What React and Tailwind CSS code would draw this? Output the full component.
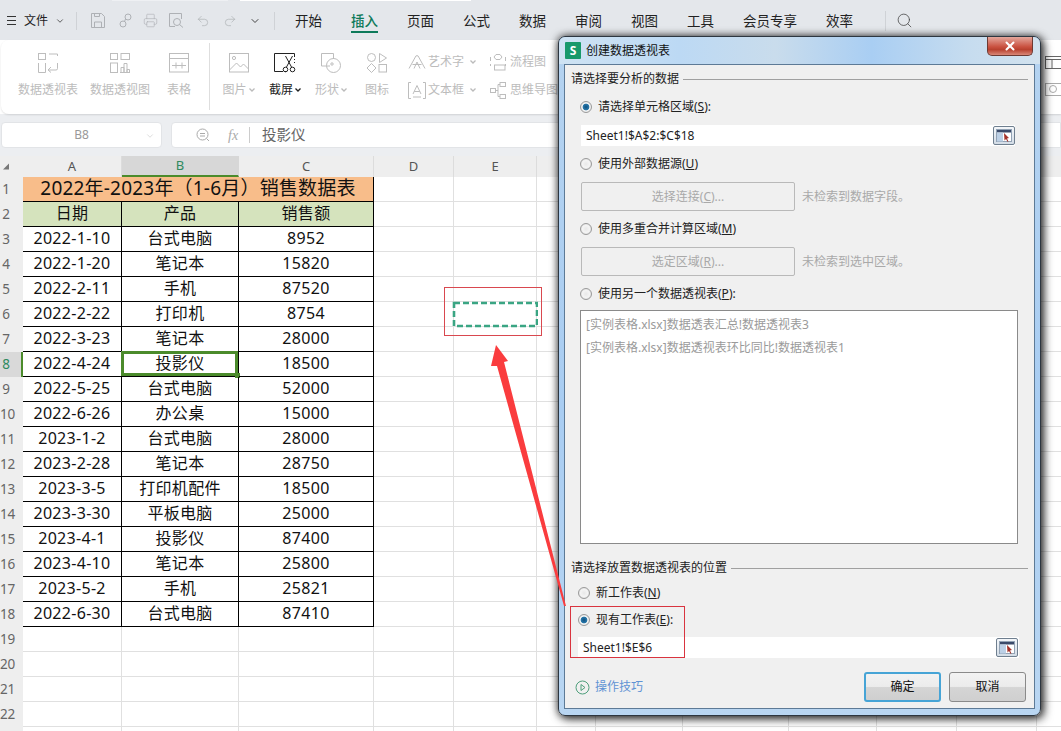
import React from "react";
import { ChevronDown, Printer, Undo2, Redo2, Search, X } from "lucide-react";

const Ic = ({ w = 20, h = 20, c = "#bdbdbd", children, className = "" }) => (
  <svg width={w} height={h} viewBox={`0 0 ${w} ${h}`} fill="none" stroke={c} strokeWidth="1" className={className}>
    {children}
  </svg>
);

const Pivot = () => (
  <Ic>
    <rect x="0.5" y="0.5" width="7" height="6" />
    <path d="M11 1h8.5v2M0.5 10v9.5h7V10M19.5 10v5.5a1.5 1.5 0 0 1-1.5 1.5h-7M13 14l-3 3 3 2.5" />
  </Ic>
);
const PivotChart = () => (
  <Ic>
    <rect x="0.5" y="0.5" width="7" height="6" />
    <rect x="11" y="0.5" width="8.5" height="6" />
    <rect x="0.5" y="10" width="7" height="9.5" />
    <path d="M11 19.5v-5h3v5M14 19.5v-9h3v9M17 19.5v-3h2.5v3M10 19.5h10" />
  </Ic>
);
const TableI = () => (
  <Ic>
    <rect x="0.5" y="0.5" width="19" height="18.5" />
    <path d="M0.5 5.5h19M3 12.5h14M7 9.5v6M13 9.5v6" />
  </Ic>
);
const Pic = () => (
  <Ic>
    <rect x="0.5" y="0.5" width="19" height="18.5" />
    <circle cx="5" cy="5" r="1.6" />
    <path d="M0.5 17l7-7 4 4 3-3 5 5" />
  </Ic>
);
const Shot = () => (
  <Ic w={22} h={20} c="#222">
    <path d="M9 18.5H0.5V0.5h20V4" />
    <path d="M11 18.5h1" strokeDasharray="1 1" />
    <path d="M20.5 6v1M20.5 9v1" />
    <path d="M11.5 3l6 11M18.5 3l-6 11" />
    <circle cx="11.5" cy="16.5" r="2.3" />
    <circle cx="18.5" cy="16.5" r="2.3" />
  </Ic>
);
const Shape = () => (
  <Ic>
    <path d="M9 13H0.5V0.5h12V6" />
    <circle cx="12.5" cy="12.5" r="7" />
    <circle cx="11" cy="11" r="1.2" />
  </Ic>
);
const Icons = () => (
  <Ic>
    <circle cx="4.5" cy="4.5" r="4" />
    <path d="M12.5 0.5l7 4.5-7 4.5zM4.5 10.5l4.5 4.5-4.5 4.5L0 15z" />
    <rect x="12" y="11.5" width="7.5" height="7.5" />
  </Ic>
);
const Art = () => (
  <Ic w={18} h={14}>
    <path d="M1 13.5L8 0.8h2l7 12.7M4.5 9.5h9M6 13.5L9 7l3 6.5" />
  </Ic>
);
const TextBox = () => (
  <Ic w={18} h={17}>
    <path d="M3 0.5H0.5v16H3M15 0.5h2.5v16H15M5 12L9 3.5 13 12M6.2 9.5h5.6M5 15h8" />
  </Ic>
);
const Flow = () => (
  <Ic w={16} h={17}>
    <path d="M6 0.5h4l2 2.5-2 2.5H6L4 3zM0.5 3v4M15.5 3v4M0.5 10v2M15.5 10v2" />
    <rect x="4.5" y="11" width="10.5" height="5" />
  </Ic>
);
const Mind = () => (
  <Ic w={16} h={17}>
    <rect x="0.5" y="6.5" width="5" height="4" />
    <rect x="10" y="0.5" width="5.5" height="4" />
    <rect x="10" y="12.5" width="5.5" height="4" />
    <path d="M5.5 8.5H8M8 2.5v12M8 2.5h2M8 14.5h2" />
  </Ic>
);

const Caret = ({ c = "#bbb" }) => (
  <svg width="6" height="4" viewBox="0 0 6 4" fill="none" stroke={c} strokeWidth="1.3" className="ml-[2px]">
    <path d="M0.5 0.5L3 3l2.5-2.5" />
  </svg>
);

const Big = ({ w, icon, label, dark, caret }) => (
  <div className={`flex flex-col items-center pt-[13px] ${w}`}>
    <div className="h-[20px] flex items-center">{icon}</div>
    <div className={`mt-[9px] h-[16px] flex items-center text-[12px] leading-[16px] ${dark ? "text-[#222]" : "text-[#bcbcbc]"}`}>
      {label}
      {caret && <Caret c={dark ? "#222" : "#bbb"} />}
    </div>
  </div>
);

const Small = ({ icon, label, caret }) => (
  <div className="flex items-center h-[20px] text-[12px] text-[#bcbcbc]">
    <div className="w-[20px] flex justify-start">{icon}</div>
    {label}
    {caret && <span className="ml-[4px]"><Caret /></span>}
  </div>
);

const widths = [
  "w-[99px]", "w-[117px]", "w-[135px]", "w-[80px]", "w-[83px]", "w-[59px]",
  "w-[87px]", "w-[106px]", "w-[88px]", "w-[80px]", "w-[80px]", "w-[25px]",
];
const letters = ["A", "B", "C", "D", "E", "", "", "", "", "", "", ""];

const data = [
  ["2022-1-10", "台式电脑", "8952"],
  ["2022-1-20", "笔记本", "15820"],
  ["2022-2-11", "手机", "87520"],
  ["2022-2-22", "打印机", "8754"],
  ["2022-3-23", "笔记本", "28000"],
  ["2022-4-24", "投影仪", "18500"],
  ["2022-5-25", "台式电脑", "52000"],
  ["2022-6-26", "办公桌", "15000"],
  ["2023-1-2", "台式电脑", "28000"],
  ["2023-2-28", "笔记本", "28750"],
  ["2023-3-5", "打印机配件", "18500"],
  ["2023-3-30", "平板电脑", "25000"],
  ["2023-4-1", "投影仪", "87400"],
  ["2023-4-10", "笔记本", "25800"],
  ["2023-5-2", "手机", "25821"],
  ["2022-6-30", "台式电脑", "87410"],
];

const RowHead = ({ n }) => (
  <div className={`w-[23px] h-full shrink-0 text-[13.5px] flex items-center ${n === 8 ? "bg-[#d9d9d9] text-[#2f8a5f] border-r-2 border-[#4b8b2b]" : "bg-[#eeeeee] text-[#666]"}`}>
    <span className="w-[12px] text-center -tracking-[0.3px]">{n}</span>
  </div>
);

const Blank = ({ from = 0 }) =>
  widths.slice(from).map((w, i) => (
    <div key={i} className={`${w} h-full shrink-0 border-r border-b border-[#e0e0e0]`} />
  ));

const Cell = ({ w, bg = "", children, sel }) => (
  <div className={`${w} ${bg} relative h-full shrink-0 border-r border-b border-black flex items-center justify-center pb-[2px] text-[16px] tracking-[0.3px] text-[#111]`}>
    {children}
    {sel && (
      <>
        <div className="absolute -left-[1px] -top-[1px] right-0 bottom-0 border-[3px] border-[#4b8b2b]" />
        <div className="absolute -right-[2px] -bottom-[2px] w-[5px] h-[5px] bg-[#4b8b2b]" />
      </>
    )}
  </div>
);

const Radio = ({ on, className = "" }) => (
  <span
    className={`inline-block w-[12px] h-[12px] rounded-full border border-[#9a9a9a] shrink-0 ${
      on
        ? "bg-[radial-gradient(circle,#0f4f7f_0%,#2a7aac_44%,#f4f4f4_52%,#dcdcdc_100%)]"
        : "bg-[radial-gradient(circle,#e8e8e8_0%,#f4f4f4_50%,#cfcfcf_100%)]"
    } ${className}`}
  />
);

const SectionHead = ({ children, className = "" }) => (
  <div className={`flex items-center h-[16px] ml-[6px] mr-[6px] text-[12px] text-[#222] ${className}`}>
    <span>{children}</span>
    <div className="flex-1 h-px bg-[#a0a0a0] ml-[4px]" />
  </div>
);

const RefBtn = () => (
  <div className="w-[22px] h-[19px] rounded-[2px] border border-[#6f7f8f] bg-[linear-gradient(#f4f7fa,#d3dce6)] flex items-center justify-center">
    <svg width="16" height="13" viewBox="0 0 16 13">
      <rect x="0.5" y="0.5" width="15" height="12" fill="#fff" stroke="#93a3b5" />
      <rect x="1" y="1" width="14" height="2.5" fill="#3a4a6a" />
      <rect x="1" y="3.5" width="6" height="9" fill="#bcd0e6" />
      <path d="M8 4l5 5-2 .5 1.5 3-1 .3L10 10l-1.5 1.5z" fill="#a3322a" />
    </svg>
  </div>
);

const DisabledBtn = ({ children }) => (
  <div className="w-[214px] h-[29px] rounded-[2px] border border-[#b9b9b9] bg-[#f0f0f0] flex items-center justify-center text-[12px] text-[#a9a9a9]">
    {children}
  </div>
);

const Dialog = () => (
  <div className="absolute left-[558px] top-[36px] w-[483px] h-[680px] rounded-[7px] border border-[#2d3640] shadow-[3px_3px_10px_rgba(0,0,0,0.65),0_0_9px_rgba(0,0,0,0.7)] bg-[linear-gradient(180deg,#b5d3f0_0%,#a9cdf2_55%,#b9d6f2_100%)] flex flex-col px-[5px] pb-[6px] z-10">
    <div className="h-[27px] shrink-0 -mx-[5px] px-[6px] rounded-t-[7px] flex items-center bg-[linear-gradient(90deg,#cfe3f3,#bcd9f4_25%,#c9dcec_45%,#a9cef3_65%,#c6dcef_85%,#d2e2ee)]">
      <div className="w-[16px] h-[17px] rounded-[1px] bg-[#17996b] text-white text-[12px] font-bold flex items-center justify-center leading-none">S</div>
      <span className="ml-[5px] text-[12px] text-[#111]">创建数据透视表</span>
      <div className="ml-auto mr-[1px] -mt-[9px] w-[46px] h-[19px] rounded-b-[5px] border border-t-0 border-[#6d3a33] bg-[linear-gradient(#e5a79c,#c9503f_55%,#b8412f_70%,#d98878)] flex items-center justify-center">
        <X size={14} strokeWidth={3.5} color="#fff" />
      </div>
    </div>

    <div className="flex-1 border border-[#5d7a96] bg-[#f0f0f0] flex flex-col pt-[6px] min-h-0">
      <SectionHead>请选择要分析的数据</SectionHead>
      <div className="flex items-center h-[18px] mt-[11px] ml-[15px] text-[12px] text-[#222]">
        <Radio on />
        <span className="ml-[6px]">请选择单元格区域(<u>S</u>):</span>
      </div>
      <div className="h-[21px] mt-[9px] ml-[16px] w-[434px] bg-white flex items-center justify-between pl-[5px]">
        <span className="text-[12px] text-[#222]">Sheet1!$A$2:$C$18</span>
        <RefBtn />
      </div>
      <div className="flex items-center h-[18px] mt-[9px] ml-[15px] text-[12px] text-[#222]">
        <Radio />
        <span className="ml-[6px]">使用外部数据源(<u>U</u>)</span>
      </div>
      <div className="flex items-center mt-[9px] ml-[16px]">
        <DisabledBtn>选择连接(<u>C</u>)...</DisabledBtn>
        <span className="ml-[7px] text-[12px] text-[#a9a9a9]">未检索到数据字段。</span>
      </div>
      <div className="flex items-center h-[18px] mt-[9px] ml-[15px] text-[12px] text-[#222]">
        <Radio />
        <span className="ml-[6px]">使用多重合并计算区域(<u>M</u>)</span>
      </div>
      <div className="flex items-center mt-[9px] ml-[16px]">
        <DisabledBtn>选定区域(<u>R</u>)...</DisabledBtn>
        <span className="ml-[7px] text-[12px] text-[#a9a9a9]">未检索到选中区域。</span>
      </div>
      <div className="flex items-center h-[18px] mt-[9px] ml-[15px] text-[12px] text-[#222]">
        <Radio />
        <span className="ml-[6px]">使用另一个数据透视表(<u>P</u>):</span>
      </div>
      <div className="h-[234px] mt-[7px] ml-[15px] w-[438px] shrink-0 bg-white border border-[#8a8a8a] pl-[5px] pt-[2px] text-[12px] text-[#9a9a9a] leading-[23px]">
        <div>[实例表格.xlsx]数据透表汇总!数据透视表3</div>
        <div>[实例表格.xlsx]数据透视表环比同比!数据透视表1</div>
      </div>
      <SectionHead className="mt-[16px]">请选择放置数据透视表的位置</SectionHead>
      <div className="flex items-center h-[18px] mt-[8px] ml-[13px] text-[12px] text-[#222]">
        <Radio />
        <span className="ml-[6px]">新工作表(<u>N</u>)</span>
      </div>
      <div className="flex items-center h-[18px] mt-[9px] ml-[13px] text-[12px] text-[#222]">
        <Radio on />
        <span className="ml-[6px]">现有工作表(<u>E</u>):</span>
      </div>
      <div className="h-[21px] mt-[8px] ml-[13px] w-[441px] bg-white flex items-center justify-between pl-[5px] pr-[1px]">
        <span className="text-[12px] text-[#222]">Sheet1!$E$6</span>
        <RefBtn />
      </div>
      <div className="flex items-center h-[30px] mt-[14px] ml-[10px]">
        <svg width="15" height="15" viewBox="0 0 15 15" fill="none">
          <circle cx="7.5" cy="7.5" r="6.5" stroke="#4f9f7c" />
          <path d="M6 4.5l4 3-4 3z" stroke="#4f9f7c" />
        </svg>
        <span className="ml-[5px] text-[12px] text-[#5f93d4]">操作技巧</span>
        <div className="ml-auto flex gap-[8px] mr-[8px]">
          <div className="w-[77px] h-[30px] rounded-[3px] border-2 border-[#46a4d6] bg-[linear-gradient(#f2f2f2,#ececec_48%,#d5d5d5_52%,#cfcfcf)] flex items-center justify-center text-[12px] text-[#111]">确定</div>
          <div className="w-[77px] h-[30px] rounded-[3px] border border-[#8a8a8a] bg-[linear-gradient(#f2f2f2,#ececec_48%,#d5d5d5_52%,#cfcfcf)] flex items-center justify-center text-[12px] text-[#111]">取消</div>
        </div>
      </div>
    </div>
  </div>
);

const Annotations = () => (
  <>
    <div className="absolute left-[444px] top-[287px] w-[98px] h-[49px] border border-[#d9484f] z-0" />
    <svg width="86" height="28" className="absolute left-[452px] top-[300px] z-0" fill="none">
      <rect x="2" y="3" width="83" height="23" stroke="#3aa583" strokeWidth="2.6" strokeDasharray="6 3" />
    </svg>
    <div className="absolute left-[570px] top-[606px] w-[115px] h-[52px] border border-[#d9343f] z-20" />
    <svg width="90" height="270" className="absolute left-[485px] top-[340px] z-20">
      <polygon points="11,5 23,21 19,22 81,266 79,266 12,26 6,26" fill="#fa3c3e" />
    </svg>
  </>
);

export default function App() {
  return (
    <div className="relative w-[1061px] h-[731px] overflow-hidden bg-white text-[#222] [font-family:'Noto_Sans','Noto_Sans_CJK_SC',sans-serif]">
      {/* Strip of the browser tabs above the menu */}
      <div className="h-px bg-[#e4e7eb] flex">
        <div className="ml-[112px] w-[116px] bg-[#eef0f3]" />
        <div className="ml-[12px] w-[231px] bg-white" />
      </div>

      {/* Title and menu bar */}
      <div className="h-[39px] bg-[#e4e7eb] flex items-center relative">
        <div className="ml-[7px] w-[9px] flex flex-col gap-[3px]">
          <div className="h-px bg-[#333]" />
          <div className="h-px bg-[#333]" />
          <div className="h-px bg-[#333]" />
        </div>
        <span className="ml-[8px] text-[12px] text-[#222]">文件</span>
        <ChevronDown size={10} strokeWidth={2} color="#444" className="ml-[7px]" />
        <div className="ml-[11px] h-[18px] w-px bg-[#cfd2d6]" />
        <svg width="14" height="15" viewBox="0 0 14 15" fill="none" stroke="#aeb1b5" className="ml-[14px]">
          <path d="M0.5 0.5h10l3 3v11H0.5zM3.5 14.5V9h7v5.5M3.5 0.5v3h5v-3" />
        </svg>
        <svg width="13" height="15" viewBox="0 0 13 15" fill="none" stroke="#aeb1b5" className="ml-[14px]">
          <circle cx="9" cy="4" r="3" />
          <circle cx="4" cy="11" r="3" />
          <path d="M6.5 6l-1 2.5" />
        </svg>
        <Printer size={15} strokeWidth={1} color="#aeb1b5" className="ml-[11px]" />
        <svg width="15" height="15" viewBox="0 0 15 15" fill="none" stroke="#aeb1b5" className="ml-[11px]">
          <path d="M6 13.5H0.5V0.5h12V6" />
          <circle cx="8" cy="9" r="3.5" />
          <path d="M10.5 11.5l3.5 3" />
        </svg>
        <Undo2 size={14} strokeWidth={1.2} color="#aeb1b5" className="ml-[12px]" />
        <Redo2 size={14} strokeWidth={1.2} color="#aeb1b5" className="ml-[13px]" />
        <ChevronDown size={12} strokeWidth={2} color="#444" className="ml-[12px]" />
        <div className="ml-[13px] h-[18px] w-px bg-[#cfd2d6]" />
        <div className="ml-[20px] flex gap-[29px] text-[13.5px] text-[#222] h-full">
          {["开始", "插入", "页面", "公式", "数据", "审阅", "视图", "工具", "会员专享", "效率"].map((t) => (
            <div key={t} className="relative flex items-center h-full pt-px">
              <span className={t === "插入" ? "text-[#0e7a5a] font-medium" : ""}>{t}</span>
              {t === "插入" && <div className="absolute left-0 right-0 top-[30px] h-[2px] bg-[#0e7a5a]" />}
            </div>
          ))}
        </div>
        <div className="ml-[32px] h-[20px] w-px bg-[#cfd2d6]" />
        <Search size={17} strokeWidth={1.1} color="#444" className="ml-[10px]" />
      </div>

      {/* Ribbon */}
      <div className="h-[74px] ml-[1px] bg-white rounded-l-[8px] flex pl-[11px] shadow-[0_1px_2px_rgba(0,0,0,0.12)] relative">
        <Big w="w-[72px]" icon={<Pivot />} label="数据透视表" />
        <Big w="w-[72px]" icon={<PivotChart />} label="数据透视图" />
        <Big w="w-[46px]" icon={<TableI />} label="表格" />
        <div className="w-px h-[67px] mt-[3px] ml-[7px] mr-[5px] bg-[#dedede]" />
        <Big w="w-[47px]" icon={<Pic />} label="图片" caret />
        <Big w="w-[46px]" icon={<Shot />} label="截屏" dark caret />
        <Big w="w-[46px]" icon={<Shape />} label="形状" caret />
        <Big w="w-[46px]" icon={<Icons />} label="图标" />
        <div className="ml-[8px] w-[82px] pt-[12px] flex flex-col gap-[8px]">
          <Small icon={<Art />} label="艺术字" caret />
          <Small icon={<TextBox />} label="文本框" caret />
        </div>
        <div className="w-[70px] pt-[12px] flex flex-col gap-[8px] whitespace-nowrap">
          <Small icon={<Flow />} label="流程图" />
          <Small icon={<Mind />} label="思维导图" />
        </div>
        <div className="ml-auto flex flex-col pt-[16px] gap-[12px] w-[16px]">
          <svg width="16" height="13" viewBox="0 0 16 13" fill="none" stroke="#666">
            <rect x="0.5" y="0.5" width="16" height="12" />
            <path d="M0.5 3.5h16M7 3.5v9" />
          </svg>
          <svg width="16" height="15" viewBox="0 0 16 15" fill="none" stroke="#aaa">
            <rect x="0.5" y="2.5" width="16" height="12" />
            <circle cx="8" cy="8" r="3.5" />
          </svg>
        </div>
      </div>

      {/* Formula bar */}
      <div className="h-[42px] bg-[#eceef1] flex pt-[8px] pl-[1px] pb-[8px]">
        <div className="w-[161px] h-[26px] bg-white rounded-[4px] border border-[#e2e4e7] flex items-center justify-center relative text-[12px] text-[#999]">
          B8
          <ChevronDown size={10} strokeWidth={1.2} color="#bbb" className="absolute right-[6px] top-[8px]" />
        </div>
        <div className="ml-[9px] flex-1 h-[26px] bg-white rounded-l-[4px] border border-[#e2e4e7] flex items-center">
          <svg width="14" height="14" viewBox="0 0 14 14" fill="none" stroke="#aaa" className="ml-[24px]">
            <circle cx="6.5" cy="6.5" r="5.5" />
            <path d="M4 5.5h5M4 8h5M10.5 10.5L13 13" />
          </svg>
          <span className="ml-[18px] text-[14px] italic text-[#aaa] [font-family:'Liberation_Serif',serif]">fx</span>
          <div className="ml-[11px] w-px h-[16px] bg-[#ccc]" />
          <span className="ml-[12px] text-[14.5px] text-[#666]">投影仪</span>
        </div>
      </div>

      {/* Column headers */}
      <div className="h-[21px] flex bg-[#eeeeee]">
        <div className="w-[23px] shrink-0 flex items-center pl-[3px]">
          <svg width="7" height="7" viewBox="0 0 7 7"><path d="M6 0.5V6.5H0z" fill="#777" /></svg>
        </div>
        {widths.map((w, i) => (
          <div
            key={i}
            className={`${w} shrink-0 h-full flex items-center justify-center text-[13px] border-r ${
              i === 1 ? "bg-[#d7d7d7] text-[#2f8a5f] border-b-2 border-b-[#4b8b2b] border-r-transparent" : "text-[#555] border-[#dcdcdc]"
            }`}
          >
            {letters[i]}
          </div>
        ))}
      </div>

      {/* Sheet */}
      <div className="flex flex-col">
        <div className="h-[25px] flex">
          <RowHead n={1} />
          <div className="w-[351px] shrink-0 h-full bg-[#f8bd8a] border-r border-b border-black flex items-center justify-center pb-[2px] text-[19px] tracking-[0.2px] text-[#111]">
            2022年-2023年（1-6月）销售数据表
          </div>
          <Blank from={3} />
        </div>
        <div className="h-[25px] flex">
          <RowHead n={2} />
          {["日期", "产品", "销售额"].map((t, i) => (
            <Cell key={t} w={widths[i]} bg="bg-[#d5e3bd]">{t}</Cell>
          ))}
          <Blank from={3} />
        </div>
        {data.map((r, i) => (
          <div key={i} className="h-[25px] flex">
            <RowHead n={i + 3} />
            {r.map((t, j) => (
              <Cell key={j} w={widths[j]} sel={i === 5 && j === 1}>{t}</Cell>
            ))}
            <Blank from={3} />
          </div>
        ))}
        {[19, 20, 21, 22, ""].map((n) => (
          <div key={n} className="h-[25px] flex">
            <RowHead n={n} />
            <Blank />
          </div>
        ))}
      </div>

      <Annotations />
      <Dialog />
    </div>
  );
}
